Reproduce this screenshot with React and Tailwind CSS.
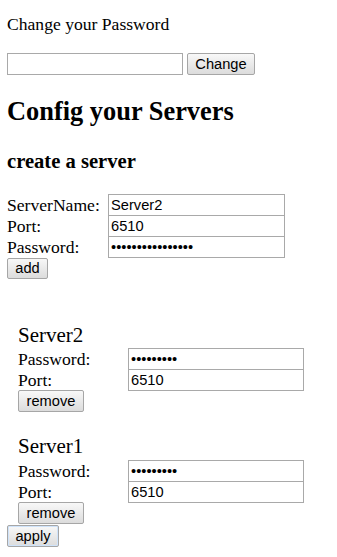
const inputCls =
  "block border border-[#a9a9a9] bg-white px-[2px] text-[14.67px] text-black font-['Liberation_Sans',Arial,sans-serif] outline-none";
const btnCls =
  "block rounded-[2px] border border-[#a6a6a6] bg-gradient-to-b from-[#f8f8f8] to-[#dcdcdc] text-[14.67px] leading-none text-black font-['Liberation_Sans',Arial,sans-serif]";

function Field({ label, labelW, inputW, value, type = "text", first }) {
  return (
    <div className={`flex items-center ${first ? "" : "-mt-px"}`}>
      <span className="leading-[21px]" style={{ width: labelW }}>
        {label}
      </span>
      <input
        type={type}
        defaultValue={value}
        className={`${inputCls} h-[22px]`}
        style={{ width: inputW }}
      />
    </div>
  );
}

function ServerBlock({ name, password, port, gap, fieldsGap }) {
  return (
    <div className="flex flex-col pl-[11px]" style={{ marginTop: gap }}>
      <div className="text-[21px] leading-[24px]">{name}</div>
      <div style={{ marginTop: fieldsGap }}>
        <Field label="Password:" labelW={110} inputW={176} value={password} type="password" first />
        <Field label="Port:" labelW={110} inputW={176} value={port} />
      </div>
      <button className={`${btnCls} w-[66px] h-[22px] -mt-px`}>remove</button>
    </div>
  );
}

export default function App() {
  return (
    <div className="min-h-screen bg-white pl-[7px] text-[17.6px] text-black font-['Liberation_Serif','Times_New_Roman',serif]">
      <div className="pt-[14px] leading-[20px]">Change your Password</div>

      <div className="mt-[19px] flex items-center gap-[4px]">
        <input type="password" className={`${inputCls} w-[176px] h-[22px]`} />
        <button className={`${btnCls} w-[68px] h-[22px]`}>Change</button>
      </div>

      <h2 className="mt-[21px] text-[26.4px] font-bold leading-[30px]">Config your Servers</h2>

      <h3 className="mt-[23px] text-[20.6px] font-bold leading-[24px]">create a server</h3>

      <div className="mt-[21px]">
        <Field label="ServerName:" labelW={101} inputW={177} value="Server2" first />
        <Field label="Port:" labelW={101} inputW={177} value="6510" />
        <Field label="Password:" labelW={101} inputW={177} value="0123456789abcdef" type="password" />
      </div>
      <button className={`${btnCls} w-[41px] h-[21px]`}>add</button>

      <ServerBlock name="Server2" password="123456789" port="6510" gap={44} fieldsGap={1} />
      <ServerBlock name="Server1" password="123456789" port="6510" gap={22} fieldsGap={2} />

      <button className={`${btnCls} mt-px w-[52px] h-[22px] border-[#6f9fd8] shadow-[inset_0_0_0_1px_#cfe3fa]`}>
        apply
      </button>
    </div>
  );
}
